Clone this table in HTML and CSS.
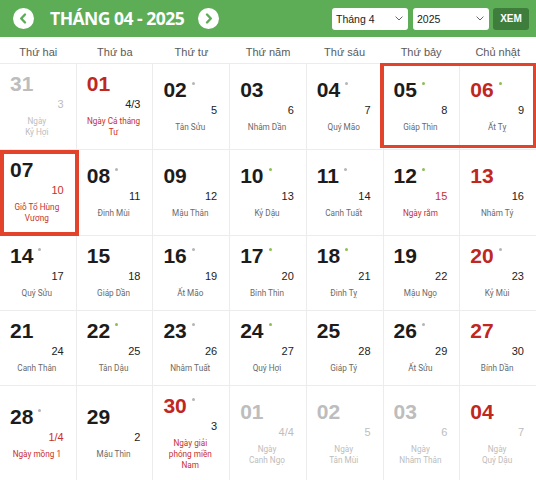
FILE: index.html
```html
<!DOCTYPE html>
<html lang="vi">
<head>
<meta charset="utf-8">
<title>Lịch tháng 04 - 2025</title>
<link rel="stylesheet" href="styles.css">
</head>
<body>
<div class="cal">
  <header class="bar">
    <button class="nav" aria-label="Tháng trước">
      <svg viewBox="0 0 21 21" width="21" height="21"><circle cx="10.5" cy="10.5" r="10.5" fill="#fff"/><path d="M12 6.5 L8.2 10.5 L12 14.5" fill="none" stroke="#5dad57" stroke-width="2.4" stroke-linecap="round" stroke-linejoin="round"/></svg>
    </button>
    <h1 class="title">THÁNG 04 - 2025</h1>
    <button class="nav" aria-label="Tháng sau">
      <svg viewBox="0 0 21 21" width="21" height="21"><circle cx="10.5" cy="10.5" r="10.5" fill="#fff"/><path d="M9 6.5 L12.8 10.5 L9 14.5" fill="none" stroke="#5dad57" stroke-width="2.4" stroke-linecap="round" stroke-linejoin="round"/></svg>
    </button>
    <div class="controls">
      <div class="select"><span>Tháng 4</span><svg viewBox="0 0 8 5" width="8" height="5"><path d="M0.6 0.6 L4 4 L7.4 0.6" fill="none" stroke="#666" stroke-width="1"/></svg></div>
      <div class="select"><span>2025</span><svg viewBox="0 0 8 5" width="8" height="5"><path d="M0.6 0.6 L4 4 L7.4 0.6" fill="none" stroke="#666" stroke-width="1"/></svg></div>
      <button class="go">XEM</button>
    </div>
  </header>

  <div class="weekdays">
    <div>Thứ hai</div><div>Thứ ba</div><div>Thứ tư</div><div>Thứ năm</div><div>Thứ sáu</div><div>Thứ bảy</div><div>Chủ nhật</div>
  </div>

  <div class="grid">
    <div class="cell out"><div class="d">31</div><div class="l">3</div><div class="s">Ngày<br>Kỷ Hợi</div></div>
    <div class="cell sun"><div class="d">01</div><div class="l">4/3</div><div class="s red">Ngày Cá tháng Tư</div></div>
    <div class="cell"><div class="d">02<i class="dot"></i></div><div class="l">5</div><div class="s">Tân Sửu</div></div>
    <div class="cell"><div class="d">03</div><div class="l">6</div><div class="s">Nhâm Dần</div></div>
    <div class="cell"><div class="d">04<i class="dot"></i></div><div class="l">7</div><div class="s">Quý Mão</div></div>
    <div class="cell"><div class="d">05<i class="dot g"></i></div><div class="l">8</div><div class="s">Giáp Thìn</div></div>
    <div class="cell sun"><div class="d">06<i class="dot g"></i></div><div class="l">9</div><div class="s">Ất Tỵ</div></div>

    <div class="cell"><div class="d">07</div><div class="l red">10</div><div class="s red">Giỗ Tổ Hùng Vương</div></div>
    <div class="cell"><div class="d">08<i class="dot"></i></div><div class="l">11</div><div class="s">Đinh Mùi</div></div>
    <div class="cell"><div class="d">09</div><div class="l">12</div><div class="s">Mậu Thân</div></div>
    <div class="cell"><div class="d">10<i class="dot g"></i></div><div class="l">13</div><div class="s">Kỷ Dậu</div></div>
    <div class="cell"><div class="d">11<i class="dot"></i></div><div class="l">14</div><div class="s">Canh Tuất</div></div>
    <div class="cell"><div class="d">12<i class="dot g"></i></div><div class="l red">15</div><div class="s red">Ngày rằm</div></div>
    <div class="cell sun"><div class="d">13</div><div class="l">16</div><div class="s">Nhâm Tý</div></div>

    <div class="cell"><div class="d">14<i class="dot"></i></div><div class="l">17</div><div class="s">Quý Sửu</div></div>
    <div class="cell"><div class="d">15</div><div class="l">18</div><div class="s">Giáp Dần</div></div>
    <div class="cell"><div class="d">16<i class="dot"></i></div><div class="l">19</div><div class="s">Ất Mão</div></div>
    <div class="cell"><div class="d">17<i class="dot g"></i></div><div class="l">20</div><div class="s">Bính Thìn</div></div>
    <div class="cell"><div class="d">18<i class="dot g"></i></div><div class="l">21</div><div class="s">Đinh Tỵ</div></div>
    <div class="cell"><div class="d">19</div><div class="l">22</div><div class="s">Mậu Ngọ</div></div>
    <div class="cell sun"><div class="d">20<i class="dot"></i></div><div class="l">23</div><div class="s">Kỷ Mùi</div></div>

    <div class="cell"><div class="d">21</div><div class="l">24</div><div class="s">Canh Thân</div></div>
    <div class="cell"><div class="d">22<i class="dot g"></i></div><div class="l">25</div><div class="s">Tân Dậu</div></div>
    <div class="cell"><div class="d">23<i class="dot"></i></div><div class="l">26</div><div class="s">Nhâm Tuất</div></div>
    <div class="cell"><div class="d">24<i class="dot g"></i></div><div class="l">27</div><div class="s">Quý Hợi</div></div>
    <div class="cell"><div class="d">25</div><div class="l">28</div><div class="s">Giáp Tý</div></div>
    <div class="cell"><div class="d">26<i class="dot"></i></div><div class="l">29</div><div class="s">Ất Sửu</div></div>
    <div class="cell sun"><div class="d">27</div><div class="l">30</div><div class="s">Bính Dần</div></div>

    <div class="cell"><div class="d">28<i class="dot"></i></div><div class="l red">1/4</div><div class="s red">Ngày mồng 1</div></div>
    <div class="cell"><div class="d">29</div><div class="l">2</div><div class="s">Mậu Thìn</div></div>
    <div class="cell sun"><div class="d">30<i class="dot"></i></div><div class="l">3</div><div class="s red">Ngày giải phóng miền Nam</div></div>
    <div class="cell out"><div class="d">01</div><div class="l">4/4</div><div class="s">Ngày<br>Canh Ngọ</div></div>
    <div class="cell out"><div class="d">02</div><div class="l">5</div><div class="s">Ngày<br>Tân Mùi</div></div>
    <div class="cell out"><div class="d">03</div><div class="l">6</div><div class="s">Ngày<br>Nhâm Thân</div></div>
    <div class="cell out sun"><div class="d">04</div><div class="l">7</div><div class="s">Ngày<br>Quý Dậu</div></div>

    <div class="hl hl-weekend"></div>
    <div class="hl hl-today"></div>
  </div>
</div>
</body>
</html>
```

FILE: styles.css
```css
html, body {
  margin: 0;
  padding: 0;
  background: #fff;
}

body {
  font-family: "Liberation Sans", Arial, sans-serif;
  color: #222;
}

.cal {
  width: 536px;
}

/* ---------- header bar ---------- */
.bar {
  display: flex;
  align-items: center;
  height: 37px;
  background: #5dad57;
  padding: 0 7px 0 13px;
  box-sizing: border-box;
}

.nav {
  width: 21px;
  height: 21px;
  padding: 0;
  border: 0;
  background: none;
  display: flex;
  flex: none;
  cursor: pointer;
}

.title {
  margin: 0 14px 0 16px;
  font-family: "Open Sans", "Liberation Sans", sans-serif;
  font-weight: 700;
  font-size: 17.5px;
  line-height: 1;
  letter-spacing: -0.5px;
  color: #fff;
  white-space: nowrap;
}

.controls {
  margin-left: auto;
  display: flex;
  align-items: center;
  gap: 5px;
}

.select {
  width: 76px;
  height: 22px;
  box-sizing: border-box;
  padding: 0 5px 0 4px;
  display: flex;
  align-items: center;
  justify-content: space-between;
  background: #fff;
  border-radius: 3px;
  font-size: 10.5px;
  color: #222;
}

.go {
  width: 36px;
  height: 22px;
  border: 0;
  border-radius: 3px;
  background: #3e7d3b;
  color: #fff;
  font-family: "Liberation Sans", Arial, sans-serif;
  font-weight: 700;
  font-size: 10px;
  padding: 0;
  margin-left: -1px;
}

/* ---------- weekday labels ---------- */
.weekdays {
  display: grid;
  grid-template-columns: repeat(7, 1fr);
  height: 26px;
  box-sizing: border-box;
  padding-top: 3px;
  align-items: center;
  text-align: center;
  font-size: 11px;
  color: #5a5a5a;
}

/* ---------- day grid ---------- */
.grid {
  position: relative;
  display: grid;
  grid-template-columns: repeat(7, 1fr);
  gap: 1px;
  background: #ececec;
  border-top: 1px solid #ececec;
}

.cell {
  background: #fff;
  padding: 8px 12px 11px 10px;
  display: flex;
  flex-direction: column;
  justify-content: center;
  min-width: 0;
}

.d {
  font-size: 21px;
  line-height: 24px;
  font-weight: 700;
  color: #1c1c1c;
  white-space: nowrap;
}

.dot {
  display: inline-block;
  vertical-align: top;
  width: 3px;
  height: 3px;
  margin: 4px 0 0 5px;
  border-radius: 50%;
  background: #b5b5b5;
}

.dot.g {
  background: #8cbf4f;
}

.l {
  font-size: 11px;
  line-height: 17px;
  text-align: right;
  color: #222;
}

.s {
  margin-top: 3px;
  font-family: "Roboto", "Liberation Sans", sans-serif;
  font-size: 8.2px;
  line-height: 11px;
  text-align: center;
  color: #6a6a6a;
}

.red {
  color: #c9302c;
}

.sun .d {
  color: #c0271f;
}

.out .d,
.out .l,
.out .s {
  color: #bdbdbd;
}

.out.sun .d {
  color: #c0271f;
}

/* ---------- highlight frames (overlay) ---------- */
.hl {
  position: absolute;
  box-sizing: border-box;
  border: 3px solid #e4432b;
  pointer-events: none;
}

.hl-weekend {
  grid-column: 6 / 8;
  grid-row: 1 / 2;
  top: -1px;
  left: -4px;
  right: 0;
  bottom: 1px;
  border-left-width: 4px;
}

.hl-today {
  grid-column: 1 / 2;
  grid-row: 2 / 3;
  top: 0;
  left: 0;
  right: -3px;
  bottom: -1px;
  border-width: 4px;
}
```
